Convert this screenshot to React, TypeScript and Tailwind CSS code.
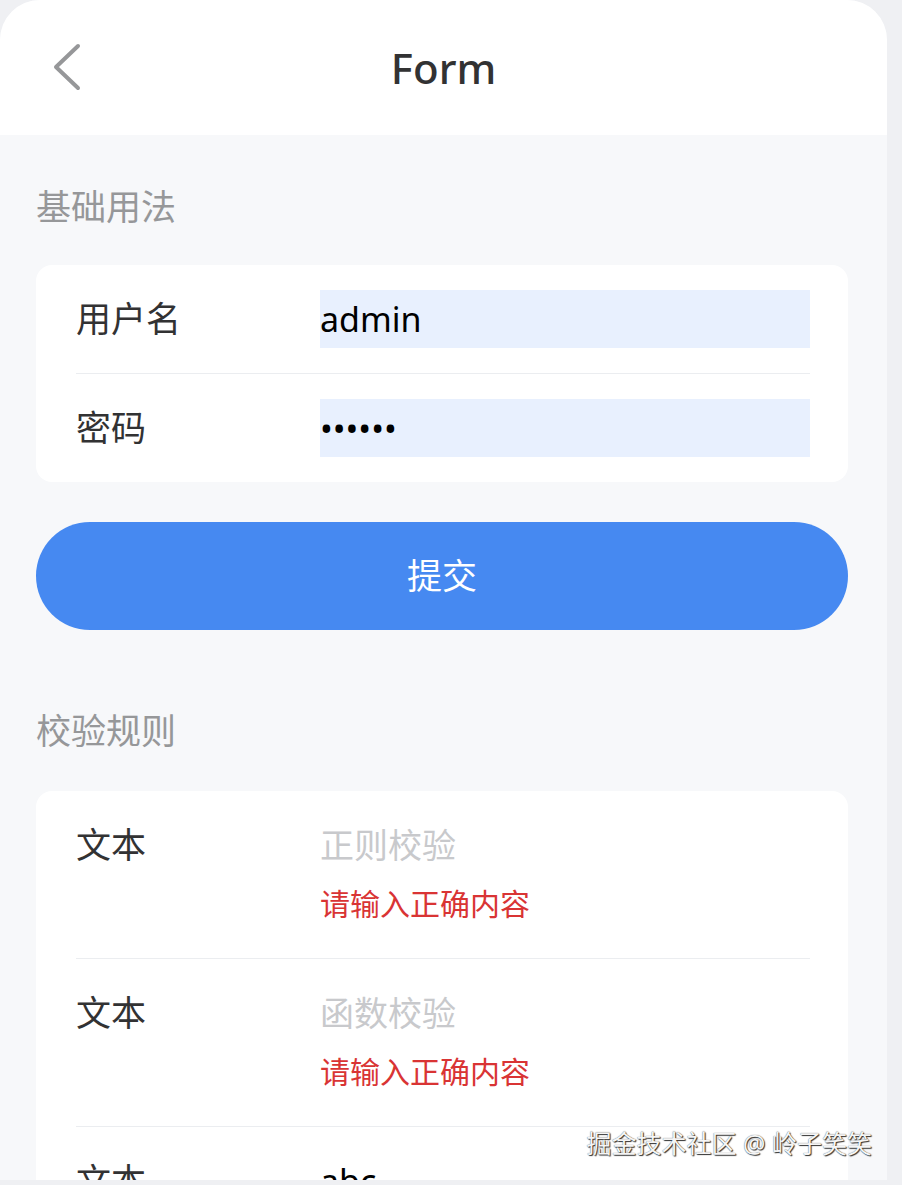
import React from "react";

const font = { fontFamily: '"Noto Sans", "Noto Sans CJK SC", sans-serif' };

function Row({
  label,
  children,
  last,
}: {
  label: string;
  children: React.ReactNode;
  last?: boolean;
}) {
  return (
    <div
      className={`ml-[40px] mr-[38px] flex py-[25px] ${last ? "" : "border-b border-[#ebedf0]"}`}
    >
      <div className="w-[244px] shrink-0 text-[35px] leading-[58px] text-[#323233]">
        {label}
      </div>
      <div className="flex-1">{children}</div>
    </div>
  );
}

function Field({
  value,
  placeholder,
  type = "text",
  filled,
}: {
  value?: string;
  placeholder?: string;
  type?: string;
  filled?: boolean;
}) {
  return (
    <input
      type={type}
      defaultValue={value}
      placeholder={placeholder}
      readOnly
      style={font}
      className={`block h-[58px] w-full text-[34px] text-black outline-none placeholder:text-[#c8c9cc] ${
        filled ? "bg-[#e8f0fe]" : "bg-transparent"
      }`}
    />
  );
}

function ErrorText() {
  return (
    <div className="text-[30px] leading-[59px] text-[#d93434]">请输入正确内容</div>
  );
}

export default function App() {
  return (
    <div className="h-[1185px] w-[902px] overflow-hidden bg-[#eff0f3]" style={font}>
      <div className="relative h-[1180px] w-[887px] overflow-hidden rounded-t-[40px] bg-[#f7f8fa]">
        <header className="relative flex h-[135px] items-center justify-center bg-white">
          <svg
            className="absolute left-[50px] top-[42px]"
            width="34"
            height="50"
            viewBox="0 0 34 50"
            fill="none"
          >
            <path
              d="M28 4 L6 25 L28 46"
              stroke="#969799"
              strokeWidth="4"
              strokeLinecap="round"
              strokeLinejoin="round"
            />
          </svg>
          <h1 className="text-[42px] font-medium text-[#323233]">Form</h1>
        </header>

        <div className="pl-[36px] pr-[39px]">
          <div className="pb-[34px] pt-[48px] text-[35px] leading-[48px] text-[#969799]">
            基础用法
          </div>
          <div className="rounded-[16px] bg-white">
            <Row label="用户名">
              <Field value="admin" filled />
            </Row>
            <Row label="密码" last>
              <Field value="123456" type="password" filled />
            </Row>
          </div>

          <button className="mt-[40px] flex h-[108px] w-full items-center justify-center rounded-full bg-[#4689f1] text-[35px] text-white">
            提交
          </button>

          <div className="pb-[36px] pt-[77px] text-[35px] leading-[48px] text-[#969799]">
            校验规则
          </div>
          <div className="rounded-[16px] bg-white">
            <Row label="文本">
              <Field placeholder="正则校验" />
              <ErrorText />
            </Row>
            <Row label="文本">
              <Field placeholder="函数校验" />
              <ErrorText />
            </Row>
            <Row label="文本" last>
              <Field value="abc" />
            </Row>
          </div>
        </div>

        <div className="absolute bottom-[24px] right-[15px] text-[25px] leading-none text-[#f5f5f5] [text-shadow:1px_1px_1px_rgba(0,0,0,0.8),0_0_1px_rgba(0,0,0,0.7)]">
          掘金技术社区 @ 岭子笑笑
        </div>
      </div>
    </div>
  );
}
